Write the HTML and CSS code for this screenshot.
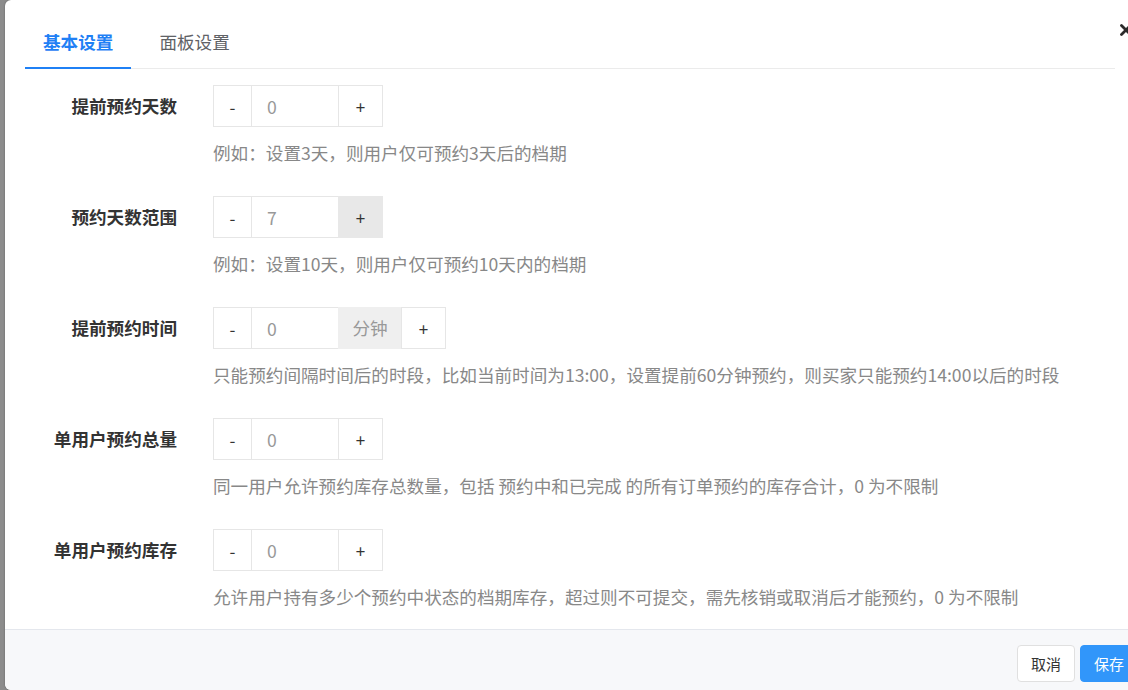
FILE: index.html
```html
<!DOCTYPE html>
<html lang="zh-CN">
<head>
  <meta charset="UTF-8" />
  <meta name="viewport" content="width=device-width, initial-scale=1.0"/>
  <title>预约设置</title>
  <link rel="stylesheet" href="styles.css">
</head>
<body>
  <div class="dialog">
    <button class="dialog-close" aria-label="关闭">
      <svg viewBox="0 0 12 12" width="12" height="12">
        <path d="M1.5 1.5 L10.5 10.5 M10.5 1.5 L1.5 10.5" stroke="#2b2b2b" stroke-width="2.8" stroke-linecap="round"/>
      </svg>
    </button>

    <div class="dialog-header">
      <div class="tabs">
        <div class="tab active">基本设置</div>
        <div class="tab">面板设置</div>
      </div>
    </div>

    <div class="form">
      <div class="form-item">
        <label class="form-label">提前预约天数</label>
        <div class="stepper">
          <button class="step-btn minus">-</button>
          <input class="step-input" type="text" value="0">
          <button class="step-btn plus">+</button>
        </div>
        <p class="form-help">例如：设置3天，则用户仅可预约3天后的档期</p>
      </div>

      <div class="form-item">
        <label class="form-label">预约天数范围</label>
        <div class="stepper">
          <button class="step-btn minus">-</button>
          <input class="step-input" type="text" value="7">
          <button class="step-btn plus hover">+</button>
        </div>
        <p class="form-help">例如：设置10天，则用户仅可预约10天内的档期</p>
      </div>

      <div class="form-item">
        <label class="form-label">提前预约时间</label>
        <div class="stepper">
          <button class="step-btn minus">-</button>
          <input class="step-input" type="text" value="0">
          <span class="step-addon">分钟</span>
          <button class="step-btn plus">+</button>
        </div>
        <p class="form-help">只能预约间隔时间后的时段，比如当前时间为13:00，设置提前60分钟预约，则买家只能预约14:00以后的时段</p>
      </div>

      <div class="form-item">
        <label class="form-label">单用户预约总量</label>
        <div class="stepper">
          <button class="step-btn minus">-</button>
          <input class="step-input" type="text" value="0">
          <button class="step-btn plus">+</button>
        </div>
        <p class="form-help">同一用户允许预约库存总数量，包括 预约中和已完成 的所有订单预约的库存合计，0 为不限制</p>
      </div>

      <div class="form-item">
        <label class="form-label">单用户预约库存</label>
        <div class="stepper">
          <button class="step-btn minus">-</button>
          <input class="step-input" type="text" value="0">
          <button class="step-btn plus">+</button>
        </div>
        <p class="form-help">允许用户持有多少个预约中状态的档期库存，超过则不可提交，需先核销或取消后才能预约，0 为不限制</p>
      </div>
    </div>

    <div class="dialog-footer">
      <button class="btn">取消</button>
      <button class="btn btn-primary">保存</button>
    </div>
  </div>
</body>
</html>
```

FILE: styles.css
```css
html, body {
  margin: 0;
  height: 100%;
  overflow: hidden;
}
body {
  background: #8c8c8c;
  font-family: "Noto Sans CJK SC", "Liberation Sans", sans-serif;
  font-size: 17.6px;
  color: #333;
}
button, input {
  font-family: inherit;
}
.dialog {
  position: relative;
  margin-left: 5px;
  width: 1150px;
  height: 690px;
  background: #fff;
  border-radius: 6px;
  box-shadow: 0 0 2px rgba(0,0,0,0.35);
  display: flex;
  flex-direction: column;
  overflow: hidden;
}
.dialog-close {
  position: absolute;
  top: 24px;
  left: 1115px;
  width: 12px;
  height: 12px;
  padding: 0;
  border: 0;
  background: none;
}
.dialog-close svg {
  display: block;
}
.dialog-header {
  padding: 16px 40px 0 20px;
}
.tabs {
  display: flex;
  gap: 10px;
  border-bottom: 1px solid #ebebeb;
}
.tab {
  height: 51px;
  line-height: 51px;
  padding: 0 18px;
  color: #606266;
  border-bottom: 2px solid transparent;
  margin-bottom: -1px;
}
.tab.active {
  color: #1f80f5;
  font-weight: bold;
  border-bottom-color: #1f80f5;
}
.form {
  flex: 1;
  min-height: 0;
  overflow: hidden;
  padding: 16px 20px 0 20px;
}
.form-item {
  display: grid;
  grid-template-columns: 152px auto;
  column-gap: 36px;
  row-gap: 14px;
  margin-bottom: 31px;
}
.form-label {
  grid-column: 1;
  text-align: right;
  font-weight: bold;
  color: #333;
  align-self: center;
  line-height: 24px;
}
.stepper {
  grid-column: 2;
  display: flex;
  height: 42px;
}
.stepper > * {
  box-sizing: border-box;
  height: 42px;
  border: 1px solid #e6e6e6;
  margin: 0 0 0 -1px;
  background: #fff;
}
.stepper > :first-child {
  margin-left: 0;
}
.step-btn {
  padding: 0;
  font-size: 17px;
  color: #333;
}
.step-btn.minus {
  width: 39px;
}
.step-btn.plus {
  width: 45px;
}
.step-btn.hover {
  background: #e8e8e8;
  border-color: #e8e8e8;
}
.step-input {
  width: 88px;
  padding: 0 0 0 15px;
  font-size: 17.6px;
  color: #999;
  outline: none;
}
.step-addon {
  width: 64px;
  background: #efefef;
  border-color: #efefef;
  color: #999;
  line-height: 40px;
  text-align: center;
}
.form-help {
  grid-column: 2;
  margin: 0;
  line-height: 24px;
  color: #888;
  white-space: nowrap;
}
.dialog-footer {
  flex-shrink: 0;
  box-sizing: border-box;
  height: 61px;
  border-top: 1px solid #e4e7ed;
  background: #f7f8fa;
  display: flex;
  justify-content: flex-end;
  align-items: flex-start;
  gap: 5px;
  padding: 15px 17px 0 0;
}
.btn {
  height: 37px;
  padding: 0 13px;
  border: 1px solid #e0e0e0;
  border-radius: 4px;
  background: #fff;
  font-size: 15px;
  color: #333;
}
.btn-primary {
  background: #3196fa;
  border-color: #3196fa;
  color: #fff;
}
```
